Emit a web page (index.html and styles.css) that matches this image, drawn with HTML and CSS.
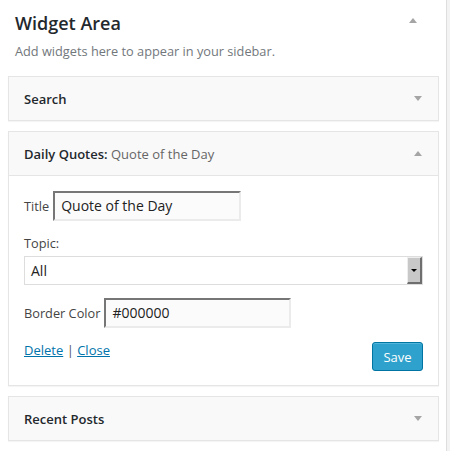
FILE: index.html
```html
<!DOCTYPE html>
<html lang="en">
<head>
<meta charset="utf-8">
<title>Widget Area</title>
<link rel="stylesheet" href="styles.css">
</head>
<body>
<div class="sidebar">
  <div class="area-head">
    <h2 class="area-title">Widget Area</h2>
    <span class="tri tri-up"></span>
  </div>
  <p class="area-desc">Add widgets here to appear in your sidebar.</p>

  <div class="widget">
    <div class="widget-top">
      <h3 class="widget-title">Search</h3>
      <span class="tri tri-down"></span>
    </div>
  </div>

  <div class="widget open">
    <div class="widget-top">
      <h3 class="widget-title">Daily Quotes:<span class="in-title"> Quote of the Day</span></h3>
      <span class="tri tri-up"></span>
    </div>
    <div class="widget-inside">
      <div class="row-title">
        <label class="lbl">Title</label>
        <span class="input input-title">Quote of the Day</span>
      </div>
      <div class="lbl lbl-block">Topic:</div>
      <div class="select">
        <span class="select-val">All</span>
        <span class="select-btn"><span class="select-arrow"></span></span>
      </div>
      <div class="row-color">
        <label class="lbl">Border Color</label>
        <span class="input input-color">#000000</span>
      </div>
      <div class="controls">
        <div class="links"><a href="#" class="link">Delete</a><span class="sep"> | </span><a href="#" class="link">Close</a></div>
        <button class="save">Save</button>
      </div>
    </div>
  </div>

  <div class="widget">
    <div class="widget-top">
      <h3 class="widget-title">Recent Posts</h3>
      <span class="tri tri-down"></span>
    </div>
  </div>
</div>
</body>
</html>
```
FILE: styles.css
```css
html, body {
  margin: 0;
  padding: 0;
}
body {
  background: #f3f3f3;
  font-family: "Open Sans", "Noto Sans", sans-serif;
  color: #444;
  width: 450px;
  height: 451px;
  overflow: hidden;
}
.sidebar {
  width: 447px;
  height: 451px;
  background: #fff;
  border-right: 1px solid #dedede;
  padding: 11px 7px 0 8px;
  box-sizing: border-box;
}
.area-head {
  display: flex;
  align-items: center;
  justify-content: space-between;
  padding: 0 22px 0 7px;
  height: 24px;
}
.area-title {
  margin: 0;
  font-size: 18px;
  line-height: 24px;
  font-weight: 600;
  color: #23282d;
}
.area-head .tri {
  margin-bottom: 5px;
}
.area-desc {
  margin: 6px 0 0 7px;
  font-size: 12.75px;
  line-height: 20px;
  color: #72777c;
}
.tri {
  width: 0;
  height: 0;
  border-left: 4px solid transparent;
  border-right: 4px solid transparent;
}
.tri-up {
  border-bottom: 5px solid #a5a5a5;
}
.tri-down {
  border-top: 5px solid #a5a5a5;
}
.widget {
  border: 1px solid #e5e5e5;
  background: #f9f9f9;
  margin-bottom: 10px;
  box-shadow: 0 1px 1px rgba(0,0,0,0.04);
}
.area-desc + .widget {
  margin-top: 15px;
}
.widget-top {
  height: 43px;
  display: flex;
  align-items: center;
  justify-content: space-between;
  padding: 0 16px 0 15px;
}
.widget-title {
  margin: 0;
  font-size: 13px;
  font-weight: 600;
  color: #23282d;
}
.in-title {
  font-weight: 400;
  color: #666;
}
.open .widget-top {
  border-bottom: 1px solid #e5e5e5;
}
.widget-inside {
  background: #fff;
  padding: 15px 15px 14px 15px;
}
.lbl {
  font-size: 12.75px;
  line-height: 20px;
  color: #444;
}
.row-title, .row-color {
  display: flex;
  align-items: center;
  gap: 4px;
}
.input {
  box-sizing: border-box;
  height: 30px;
  background: #fbfbfb;
  border-style: solid;
  border-width: 2px 2px 2px 2px;
  border-color: #767676 #ebebeb #ebebeb #767676;
  font-size: 14px;
  line-height: 26px;
  color: #222;
  padding: 0 6px;
}
.input-title {
  width: 188px;
}
.input-color {
  width: 187px;
}
.lbl-block {
  margin-top: 12px;
}
.select {
  margin-top: 3px;
  box-sizing: border-box;
  height: 29px;
  border: 1px solid #ddd;
  background: #fff;
  display: flex;
  align-items: stretch;
  justify-content: space-between;
}
.select-val {
  font-size: 14px;
  line-height: 27px;
  padding-left: 6px;
  color: #222;
}
.select-btn {
  width: 15px;
  box-sizing: border-box;
  background: #c8c8c8;
  border-style: solid;
  border-width: 1px 2px 2px 1px;
  border-color: #eee #6e6e6e #6e6e6e #eee;
  display: flex;
  align-items: center;
  justify-content: center;
}
.select-arrow {
  width: 0;
  height: 0;
  border-left: 3px solid transparent;
  border-right: 3px solid transparent;
  border-top: 3px solid #000;
}
.row-color {
  margin-top: 13px;
}
.controls {
  margin-top: 11px;
  display: flex;
  justify-content: space-between;
  align-items: flex-start;
}
.links {
  font-size: 13px;
  line-height: 20px;
  padding-top: 1px;
}
.link {
  color: #0073aa;
  text-decoration: underline;
}
.sep {
  color: #555;
}
.save {
  margin-top: 3px;
  width: 51px;
  height: 29px;
  box-sizing: border-box;
  background: #2ea2cc;
  border: 1px solid #0074a2;
  border-radius: 3px;
  box-shadow: inset 0 1px 0 rgba(120,200,230,0.5);
  color: #fff;
  font-family: "Open Sans", "Noto Sans", sans-serif;
  font-size: 13px;
  padding: 0;
  line-height: 26px;
}
```
